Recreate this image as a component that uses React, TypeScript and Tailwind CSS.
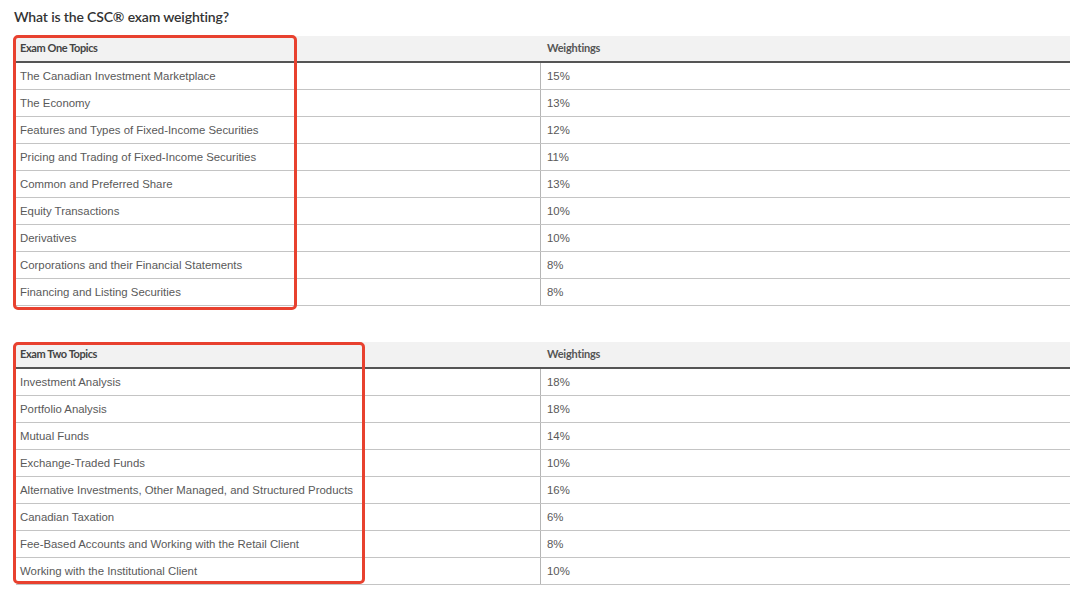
const EXAM_ONE: [string, string][] = [
  ["The Canadian Investment Marketplace", "15%"],
  ["The Economy", "13%"],
  ["Features and Types of Fixed-Income Securities", "12%"],
  ["Pricing and Trading of Fixed-Income Securities", "11%"],
  ["Common and Preferred Share", "13%"],
  ["Equity Transactions", "10%"],
  ["Derivatives", "10%"],
  ["Corporations and their Financial Statements", "8%"],
  ["Financing and Listing Securities", "8%"],
];

const EXAM_TWO: [string, string][] = [
  ["Investment Analysis", "18%"],
  ["Portfolio Analysis", "18%"],
  ["Mutual Funds", "14%"],
  ["Exchange-Traded Funds", "10%"],
  ["Alternative Investments, Other Managed, and Structured Products", "16%"],
  ["Canadian Taxation", "6%"],
  ["Fee-Based Accounts and Working with the Retail Client", "8%"],
  ["Working with the Institutional Client", "10%"],
];

function WeightTable({
  title,
  rows,
  boxClass,
}: {
  title: string;
  rows: [string, string][];
  boxClass: string;
}) {
  return (
    <div className="relative">
      <div className="grid grid-cols-[525px_1fr] h-[27px] bg-[#f2f2f2] border-b-2 border-[#555]">
        <div className="pl-1 flex items-center text-[11px] font-bold tracking-[-0.4px] text-[#444] font-['Lato',sans-serif]">
          {title}
        </div>
        <div className="pl-[6px] flex items-center text-[11px] font-bold tracking-[-0.2px] text-[#555] font-['Lato',sans-serif]">
          Weightings
        </div>
      </div>
      {rows.map(([topic, weight]) => (
        <div key={topic} className="grid grid-cols-[525px_1fr] h-[27px] border-b border-[#c4c4c4]">
          <div className="pl-1 pt-px flex items-center border-r border-[#b5b5b5] text-[11.4px] text-[#595959] font-['Liberation_Sans',Arial,sans-serif]">
            {topic}
          </div>
          <div className="pl-[6px] pt-px flex items-center text-[11.4px] text-[#595959] font-['Liberation_Sans',Arial,sans-serif]">
            {weight}
          </div>
        </div>
      ))}
      {/* annotation box */}
      <div className={`absolute border-[3px] border-[#e8412f] rounded-[5px] pointer-events-none ${boxClass}`} />
    </div>
  );
}

export default function App() {
  return (
    <div className="w-[1080px] h-[593px] bg-white overflow-hidden pl-4 pr-[10px]">
      <h2 className="ml-[-2px] pt-[6px] h-[36px] text-[14px] tracking-[-0.15px] font-semibold text-[#333] font-['Lato',sans-serif]">
        What is the CSC® exam weighting?
      </h2>
      <WeightTable title="Exam One Topics" rows={EXAM_ONE} boxClass="left-[-3px] top-[-1px] w-[284px] h-[275px]" />
      <div className="h-[36px]" />
      <WeightTable title="Exam Two Topics" rows={EXAM_TWO} boxClass="left-[-3px] top-0 w-[352px] h-[242px]" />
    </div>
  );
}
